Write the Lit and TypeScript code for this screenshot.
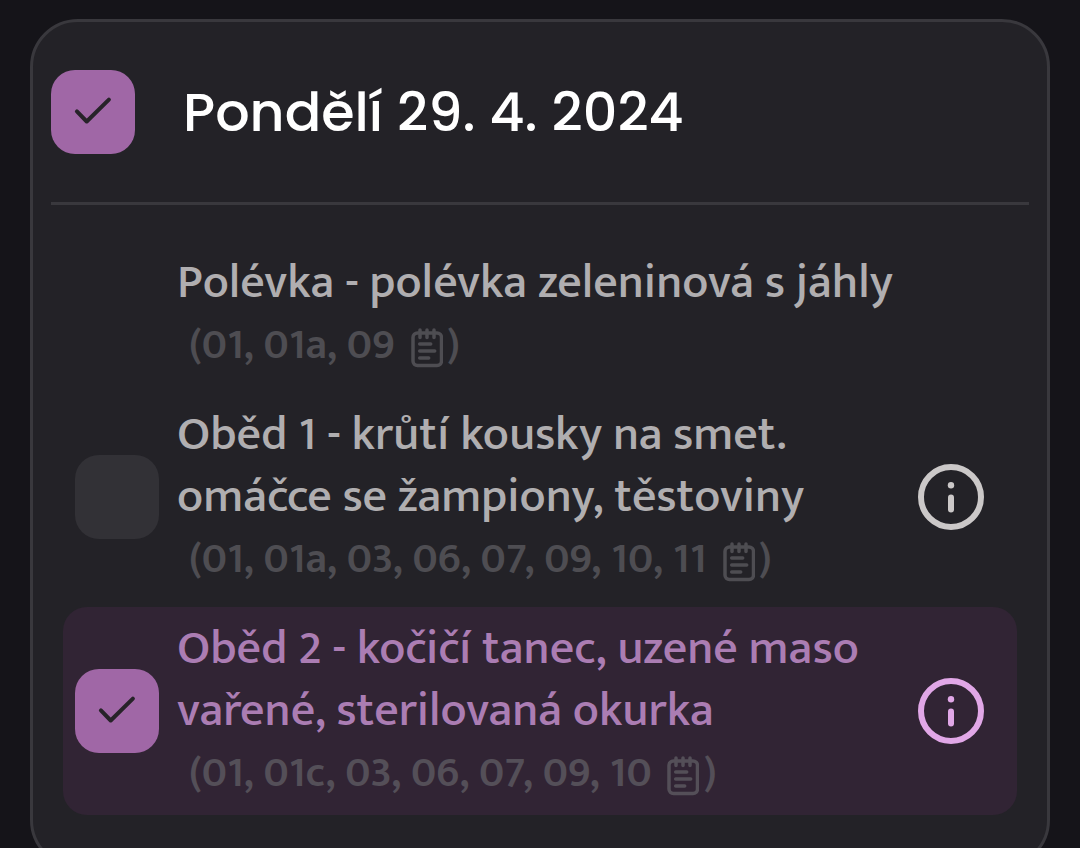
import { LitElement, html, css, svg, nothing } from "lit";
import { customElement, property, state } from "lit/decorators.js";
import { classMap } from "lit/directives/class-map.js";

interface Meal {
  id: string;
  name: string;
  allergens: string;
  orderable: boolean;
  selected: boolean;
}

@customElement("check-tile")
class CheckTile extends LitElement {
  @property({ type: Boolean }) checked = false;
  @property() label = "";

  static styles = css`
    :host { display: block; flex: none; }
    .tile { display: grid; width: 84px; height: 84px; cursor: pointer; }
    .box, .mark { grid-area: 1 / 1; width: 84px; height: 84px; margin: 0; }
    .box { appearance: none; border-radius: 24px; background: #323136; cursor: pointer; }
    .box:checked { background: #a067a6; }
    .mark { pointer-events: none; fill: none; stroke: #272329; stroke-width: 4; stroke-linecap: round; stroke-linejoin: round; }
  `;

  private toggle(e: Event) {
    this.checked = (e.target as HTMLInputElement).checked;
    this.dispatchEvent(new CustomEvent("toggle", { detail: this.checked }));
  }

  render() {
    return html`<label class="tile">
      <input class="box" type="checkbox" aria-label=${this.label} .checked=${this.checked} @change=${this.toggle} />
      ${this.checked
        ? html`<svg class="mark" viewBox="0 0 84 84" aria-hidden="true">
            <path d="M25.9 41.4 35.7 51.5 57.9 29.6" />
          </svg>`
        : nothing}
    </label>`;
  }
}

@customElement("meal-row")
class MealRow extends LitElement {
  @property({ attribute: false }) meal!: Meal;

  static styles = css`
    :host { display: block; }
    .row {
      display: flex;
      align-items: center;
      gap: 18px;
      padding: 11px 33px 11px 12px;
      border-radius: 24px;
      color: #b0aeb0;
      --note: #4e4d52;
      --info: #cbc8c8;
    }
    .row.selected { background: #312434; color: #ab7db3; --note: #544f58; --info: #e1a7e7; }
    .space { flex: none; width: 84px; }
    .text { flex: 1; min-width: 0; font-size: 48px; font-weight: 500; line-height: 62px; }
    .name, .note { margin: 0; font: inherit; }
    .note { padding-left: 12px; font-size: 43px; font-weight: 600; line-height: 62px; color: var(--note); }
    .pad { width: 32px; height: 40px; margin: 0 4px 0 6px; vertical-align: -10px; fill: none; stroke: currentColor; stroke-width: 3.5; stroke-linecap: round; stroke-linejoin: round; }
    .info { flex: none; width: 66px; height: 66px; padding: 0; border: 0; background: none; color: var(--info); cursor: pointer; }
    .ring { display: block; width: 66px; height: 66px; fill: none; stroke: currentColor; stroke-width: 6; stroke-linecap: round; }
    .dot { fill: currentColor; stroke: none; }
  `;

  private onToggle(e: CustomEvent<boolean>) {
    this.dispatchEvent(new CustomEvent("pick", { detail: e.detail }));
  }

  render() {
    const m = this.meal;
    const pad = svg`<rect x="2" y="5" width="28.5" height="32.5" rx="4.5" />
      <path d="M9 2v7.5M16 2v7.5M23 2v7.5M8.7 16h11M8.7 23h15M8.7 30h9" />`;
    return html`<div class=${classMap({ row: true, selected: m.selected })}>
      ${m.orderable
        ? html`<check-tile .checked=${m.selected} .label=${m.name} @toggle=${this.onToggle}></check-tile>`
        : html`<span class="space"></span>`}
      <div class="text">
        <h3 class="name">${m.name}</h3>
        <p class="note">(${m.allergens} <svg class="pad" viewBox="0 0 32 40" aria-hidden="true">${pad}</svg>)</p>
      </div>
      ${m.orderable
        ? html`<button class="info" aria-label="Informace">
            <svg class="ring" viewBox="0 0 66 66" aria-hidden="true">
              <circle cx="33" cy="33" r="30" />
              <circle class="dot" cx="33" cy="21.3" r="3.2" />
              <path d="M33 33.5v12" />
            </svg>
          </button>`
        : nothing}
    </div>`;
  }
}

@customElement("app-root")
class AppRoot extends LitElement {
  @state() private meals: Meal[] = [
    { id: "soup", name: "Polévka - polévka zeleninová s jáhly", allergens: "01, 01a, 09", orderable: false, selected: false },
    { id: "m1", name: "Oběd 1 - krůtí kousky na smet. omáčce se žampiony, těstoviny", allergens: "01, 01a, 03, 06, 07, 09, 10, 11", orderable: true, selected: false },
    { id: "m2", name: "Oběd 2 - kočičí tanec, uzené maso vařené, sterilovaná okurka", allergens: "01, 01c, 03, 06, 07, 09, 10", orderable: true, selected: true },
  ];

  static styles = css`
    :host {
      display: block;
      box-sizing: border-box;
      height: 100vh;
      overflow-y: auto;
      scrollbar-width: none;
      padding: 19px 30px;
      background: #151419;
      font-family: Mukta, "Noto Sans", sans-serif;
    }
    .card { padding: 0 18px 50px; border: 3px solid #39383d; border-radius: 48px; background: #232227; }
    .head { display: flex; align-items: center; gap: 48px; height: 180px; border-bottom: 3px solid #39383d; }
    .day { margin: 0; font: 500 54px/80px Poppins, Inter, sans-serif; color: #fff; }
    .meals { display: flex; flex-direction: column; gap: 6px; padding: 36px 12px 0; }
  `;

  private pick(id: string, on: boolean) {
    this.meals = this.meals.map((m) => ({ ...m, selected: m.id === id && on }));
  }

  render() {
    return html`<section class="card">
      <header class="head">
        <check-tile .checked=${this.meals.some((m) => m.selected)} label="Pondělí 29. 4. 2024"></check-tile>
        <h2 class="day">Pondělí 29. 4. 2024</h2>
      </header>
      <div class="meals">
        ${this.meals.map(
          (m) => html`<meal-row .meal=${m} @pick=${(e: CustomEvent<boolean>) => this.pick(m.id, e.detail)}></meal-row>`
        )}
      </div>
    </section>`;
  }
}
